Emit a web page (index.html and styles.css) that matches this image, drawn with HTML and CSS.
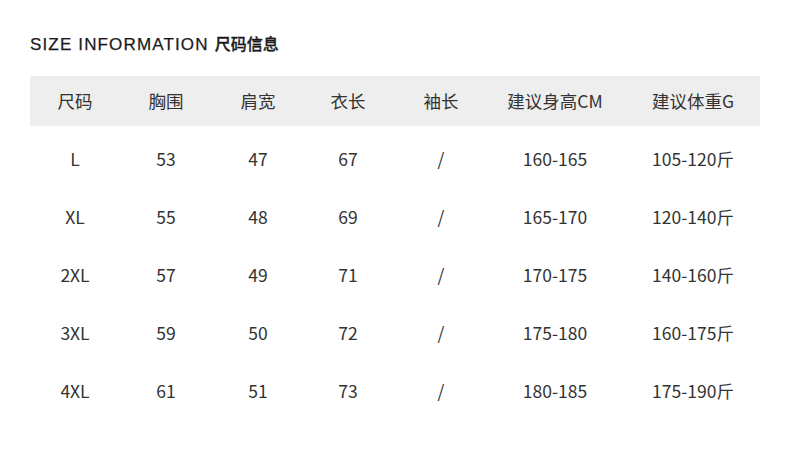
FILE: index.html
```
<!DOCTYPE html>
<html lang="zh">
<head>
<meta charset="utf-8">
<link rel="stylesheet" href="styles.css">
</head>
<body>
<div class="page">
  <h1 class="title"><span class="en">SIZE INFORMATION</span> <span class="cn">尺码信息</span></h1>
  <div class="table">
    <div class="row head">
      <div>尺码</div><div>胸围</div><div>肩宽</div><div>衣长</div><div>袖长</div><div>建议身高CM</div><div class="last">建议体重G</div>
    </div>
    <div class="body">
      <div class="row">
        <div>L</div><div>53</div><div>47</div><div>67</div><div>/</div><div>160-165</div><div class="last">105-120斤</div>
      </div>
      <div class="row">
        <div>XL</div><div>55</div><div>48</div><div>69</div><div>/</div><div>165-170</div><div class="last">120-140斤</div>
      </div>
      <div class="row">
        <div>2XL</div><div>57</div><div>49</div><div>71</div><div>/</div><div>170-175</div><div class="last">140-160斤</div>
      </div>
      <div class="row">
        <div>3XL</div><div>59</div><div>50</div><div>72</div><div>/</div><div>175-180</div><div class="last">160-175斤</div>
      </div>
      <div class="row">
        <div>4XL</div><div>61</div><div>51</div><div>73</div><div>/</div><div>180-185</div><div class="last">175-190斤</div>
      </div>
    </div>
  </div>
</div>
</body>
</html>
```
FILE: styles.css
```
html, body {
  margin: 0;
  padding: 0;
  background: #ffffff;
}
.page {
  width: 790px;
  height: 473px;
  padding: 27px 30px 0 30px;
  box-sizing: border-box;
}
.title {
  margin: 0;
  height: 25px;
  line-height: 25px;
  font-weight: normal;
  color: #1a1a1a;
  white-space: nowrap;
}
.title .en {
  font-family: "Liberation Sans", Arial, sans-serif;
  font-size: 17px;
  letter-spacing: 1.15px;
  -webkit-text-stroke: 0.25px #1a1a1a;
}
.title .cn {
  font-family: "Noto Sans CJK SC", sans-serif;
  font-size: 16px;
  font-weight: 500;
  -webkit-text-stroke: 0.3px #1a1a1a;
  margin-left: -2px;
}
.table {
  margin-top: 24px;
  width: 730px;
  font-family: "Noto Sans CJK SC", "Noto Sans", sans-serif;
  font-size: 17.5px;
  color: #333333;
}
.row {
  display: grid;
  grid-template-columns: 90px 92px 92px 88px 98px 130px 140px;
  height: 58px;
  line-height: 58px;
  text-align: center;
}
.row .last {
  padding-left: 6px;
}
.head {
  background: #eeeeee;
  height: 50px;
  line-height: 50px;
}
.body {
  padding-top: 4px;
}
```
